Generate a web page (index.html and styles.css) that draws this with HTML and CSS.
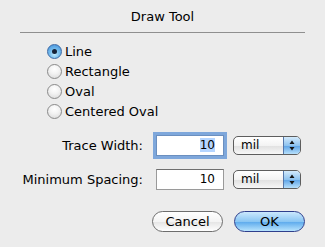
FILE: index.html
```html
<!DOCTYPE html>
<html lang="en">
<head>
    <meta charset="UTF-8" />
    <title>Draw Tool</title>
    <link rel="stylesheet" href="styles.css">
</head>
<body>
    <div class="dialog">
        <div class="title">Draw Tool</div>
        <div class="rule"></div>

        <div class="radios">
            <div class="radio-row"><span class="radio checked"></span>Line</div>
            <div class="radio-row"><span class="radio"></span>Rectangle</div>
            <div class="radio-row"><span class="radio"></span>Oval</div>
            <div class="radio-row"><span class="radio"></span>Centered Oval</div>
        </div>

        <div class="fields">
            <label class="field-label">Trace Width:</label>
            <div class="textbox focused"><span class="sel">10</span></div>
            <div class="popup">
                <span class="popup-text">mil</span>
                <span class="popup-arrows">
                    <svg width="16" height="17" viewBox="0 0 16 17"><path d="M5.5 7 L8 3.5 L10.5 7 Z M5.5 10 L8 13.5 L10.5 10 Z" fill="#151515"/></svg>
                </span>
            </div>

            <label class="field-label">Minimum Spacing:</label>
            <div class="textbox"><span>10</span></div>
            <div class="popup">
                <span class="popup-text">mil</span>
                <span class="popup-arrows">
                    <svg width="16" height="17" viewBox="0 0 16 17"><path d="M5.5 7 L8 3.5 L10.5 7 Z M5.5 10 L8 13.5 L10.5 10 Z" fill="#151515"/></svg>
                </span>
            </div>
        </div>

        <div class="buttons">
            <button class="btn">Cancel</button>
            <button class="btn default">OK</button>
        </div>
    </div>
</body>
</html>
```

FILE: styles.css
```css
body {
    margin: 0;
    background-color: #ececec;
    font-family: 'DejaVu Sans', sans-serif;
    font-size: 12px;
    color: #000;
}

.dialog {
    width: 325px;
    height: 247px;
}

.title {
    height: 32px;
    line-height: 34px;
    text-align: center;
    font-size: 13px;
}

.rule {
    margin: 0 20px;
    border-top: 1px solid #8f8f8f;
}

.radios {
    padding: 8px 0 0 47px;
}

.radio-row {
    display: flex;
    align-items: center;
    height: 20px;
    font-size: 13px;
}

.radio {
    width: 13px;
    height: 13px;
    border-radius: 50%;
    border: 1px solid #8a8a8a;
    background: radial-gradient(circle at 50% 30%, #ffffff 0%, #f2f2f2 45%, #d6d6d6 100%);
    margin-right: 3px;
    box-sizing: content-box;
    position: relative;
}

.radio.checked {
    border-color: #3d6aa5;
    background: radial-gradient(circle at 50% 70%, #c4ecff 0%, #7ac0ef 40%, #3c8ad8 100%);
}

.radio.checked::after {
    content: "";
    position: absolute;
    left: 4px;
    top: 4px;
    width: 5px;
    height: 5px;
    border-radius: 50%;
    background: #152238;
}

.fields {
    display: grid;
    grid-template-columns: 143px 68px 64px;
    column-gap: 13px;
    row-gap: 13px;
    align-items: center;
    margin-top: 14px;
}

.fields .popup {
    margin-left: -4px;
}

.field-label {
    text-align: right;
    font-size: 13px;
}

.textbox {
    height: 19px;
    background: #fff;
    border: 1px solid #9a9a9a;
    border-top-color: #6f6f6f;
    text-align: right;
    padding-right: 8px;
    line-height: 19px;
    font-size: 12px;
}

.textbox.focused {
    box-shadow: 0 0 0 3px #7ea7db;
    border-color: #6b8fbf;
}

.sel {
    background: #b5d5ff;
}

.popup {
    display: flex;
    height: 17px;
    border: 1px solid #5d5d5d;
    border-radius: 5px;
    overflow: hidden;
    background: linear-gradient(#ffffff, #f3f3f3 50%, #e0e0e0 51%, #f7f7f7);
}

.popup-text {
    flex: 1;
    padding-left: 7px;
    line-height: 17px;
    font-size: 12px;
}

.popup-arrows {
    display: flex;
    width: 16px;
    border-left: 1px solid #5577aa;
    background: linear-gradient(#d3eafc, #8ec3ef 50%, #5ba2e6 51%, #b7e0fb);
}

.buttons {
    display: flex;
    justify-content: flex-end;
    gap: 11px;
    padding: 21px 20px 0 0;
}

.btn {
    width: 71px;
    height: 21px;
    border-radius: 11px;
    border: 1px solid #6d6d6d;
    background: linear-gradient(#ffffff, #f4f4f4 50%, #e4e4e4 51%, #ffffff);
    font-family: 'DejaVu Sans', sans-serif;
    font-size: 13px;
    padding: 0;
    color: #000;
}

.btn.default {
    border-color: #2f3f8c;
    background: linear-gradient(#cbe8fd, #8ac6f3 50%, #5aa8ec 51%, #b8e4fd);
}
```
